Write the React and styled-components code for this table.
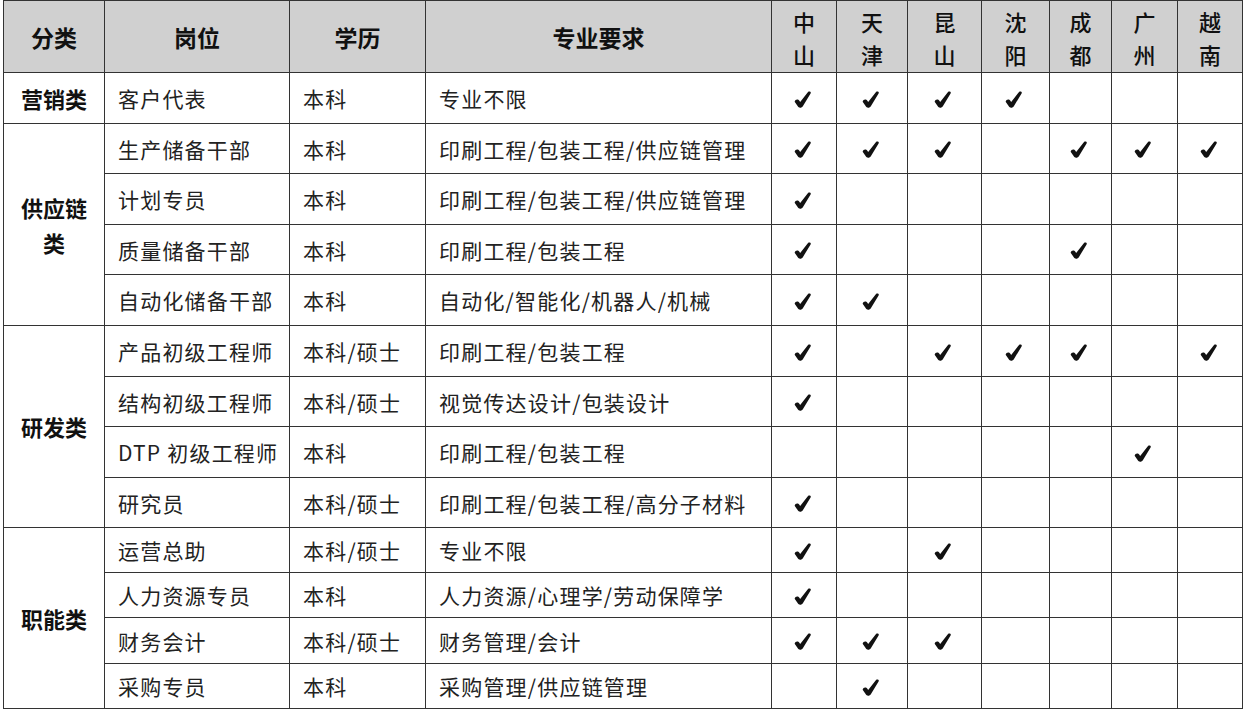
import React from 'react'
import styled, { createGlobalStyle } from 'styled-components'

const GlobalStyle = createGlobalStyle`
  body {
    margin: 0;
    background: #fff;
    font-family: "Noto Sans CJK SC", "Noto Sans", sans-serif;
    color: #1a1a1a;
  }
`

const CITIES = [['中', '山'], ['天', '津'], ['昆', '山'], ['沈', '阳'], ['成', '都'], ['广', '州'], ['越', '南']]
const WIDTHS = [101, 185, 136, 346, 65, 71, 74, 68, 62, 66, 65]

// checks: index into CITIES
const GROUPS = [
  {
    name: ['营销类'],
    rows: [
      { job: '客户代表', edu: '本科', major: '专业不限', at: [0, 1, 2, 3], h: 51 },
    ],
  },
  {
    name: ['供应链', '类'],
    rows: [
      { job: '生产储备干部', edu: '本科', major: '印刷工程/包装工程/供应链管理', at: [0, 1, 2, 4, 5, 6], h: 50 },
      { job: '计划专员', edu: '本科', major: '印刷工程/包装工程/供应链管理', at: [0], h: 51 },
      { job: '质量储备干部', edu: '本科', major: '印刷工程/包装工程', at: [0, 4], h: 50 },
      { job: '自动化储备干部', edu: '本科', major: '自动化/智能化/机器人/机械', at: [0, 1], h: 51 },
    ],
  },
  {
    name: ['研发类'],
    rows: [
      { job: '产品初级工程师', edu: '本科/硕士', major: '印刷工程/包装工程', at: [0, 2, 3, 4, 6], h: 51 },
      { job: '结构初级工程师', edu: '本科/硕士', major: '视觉传达设计/包装设计', at: [0], h: 50 },
      { job: 'DTP 初级工程师', edu: '本科', major: '印刷工程/包装工程', at: [5], h: 51 },
      { job: '研究员', edu: '本科/硕士', major: '印刷工程/包装工程/高分子材料', at: [0], h: 50 },
    ],
  },
  {
    name: ['职能类'],
    rows: [
      { job: '运营总助', edu: '本科/硕士', major: '专业不限', at: [0, 2], h: 45 },
      { job: '人力资源专员', edu: '本科', major: '人力资源/心理学/劳动保障学', at: [0], h: 45 },
      { job: '财务会计', edu: '本科/硕士', major: '财务管理/会计', at: [0, 1, 2], h: 46 },
      { job: '采购专员', edu: '本科', major: '采购管理/供应链管理', at: [1], h: 45 },
    ],
  },
]

const Page = styled.div`
  padding: 0 0 0 3px;
`

const Table = styled.table`
  border-collapse: collapse;
  table-layout: fixed;
  width: 1239px;
  border: 1.5px solid #333;
`

const HeadRow = styled.tr`
  height: 72px;
  background: #d0d0d0;
`

const HeadCell = styled.th`
  border: 1px solid #333;
  padding: 0;
  font-size: 23px;
  font-weight: 700;
  text-align: center;
  vertical-align: middle;
  color: #111;
`

const CityCell = styled(HeadCell)`
  font-size: 22px;
  font-weight: 500;
  line-height: 33px;
  padding-top: 2px;
`

const Row = styled.tr`
  height: ${({ $h }) => $h}px;
`

const GroupCell = styled.td`
  border: 1px solid #333;
  padding: 0;
  text-align: center;
  vertical-align: middle;
  font-size: 22px;
  font-weight: 700;
  line-height: 35px;
  color: #111;
`

const TextCell = styled.td`
  border: 1px solid #333;
  padding: 0 0 0 13px;
  font-size: 21px;
  letter-spacing: 1.2px;
  white-space: nowrap;
  vertical-align: middle;
  color: #222;
`

const CheckCell = styled.td`
  border: 1px solid #333;
  padding: 0;
  text-align: center;
  vertical-align: middle;
`

const CheckMark = styled.svg`
  display: block;
  margin: 2px auto 0;
  transform: translateX(-2px);
`

const Check = () => (
  <CheckMark width="17" height="17" viewBox="0 0 16 16">
    <path
      d="M0.6 10 C1.2 7.8 3.8 7.4 5.2 9.4 L5.8 10.3 L13.2 1.0 C14.2 -0.1 16.6 0.8 15.6 2.4 L8.6 13.8 C7.2 16.2 4.6 16.4 3.4 14.2 Z"
      fill="#111"
    />
  </CheckMark>
)

export default function App() {
  return (
    <Page>
      <GlobalStyle />
      <Table>
        <colgroup>
          {WIDTHS.map((w, i) => <col key={i} style={{ width: w }} />)}
        </colgroup>
        <thead>
          <HeadRow>
            <HeadCell>分类</HeadCell>
            <HeadCell>岗位</HeadCell>
            <HeadCell>学历</HeadCell>
            <HeadCell>专业要求</HeadCell>
            {CITIES.map(c => (
              <CityCell key={c.join('')}>{c[0]}<br />{c[1]}</CityCell>
            ))}
          </HeadRow>
        </thead>
        <tbody>
          {GROUPS.map(g => g.rows.map((r, i) => (
            <Row key={g.name.join('') + i} $h={r.h}>
              {i === 0 && (
                <GroupCell rowSpan={g.rows.length}>
                  {g.name.map((n, k) => <div key={k}>{n}</div>)}
                </GroupCell>
              )}
              <TextCell>{r.job}</TextCell>
              <TextCell>{r.edu}</TextCell>
              <TextCell>{r.major}</TextCell>
              {CITIES.map((c, k) => (
                <CheckCell key={k}>{r.at.includes(k) && <Check />}</CheckCell>
              ))}
            </Row>
          )))}
        </tbody>
      </Table>
    </Page>
  )
}
